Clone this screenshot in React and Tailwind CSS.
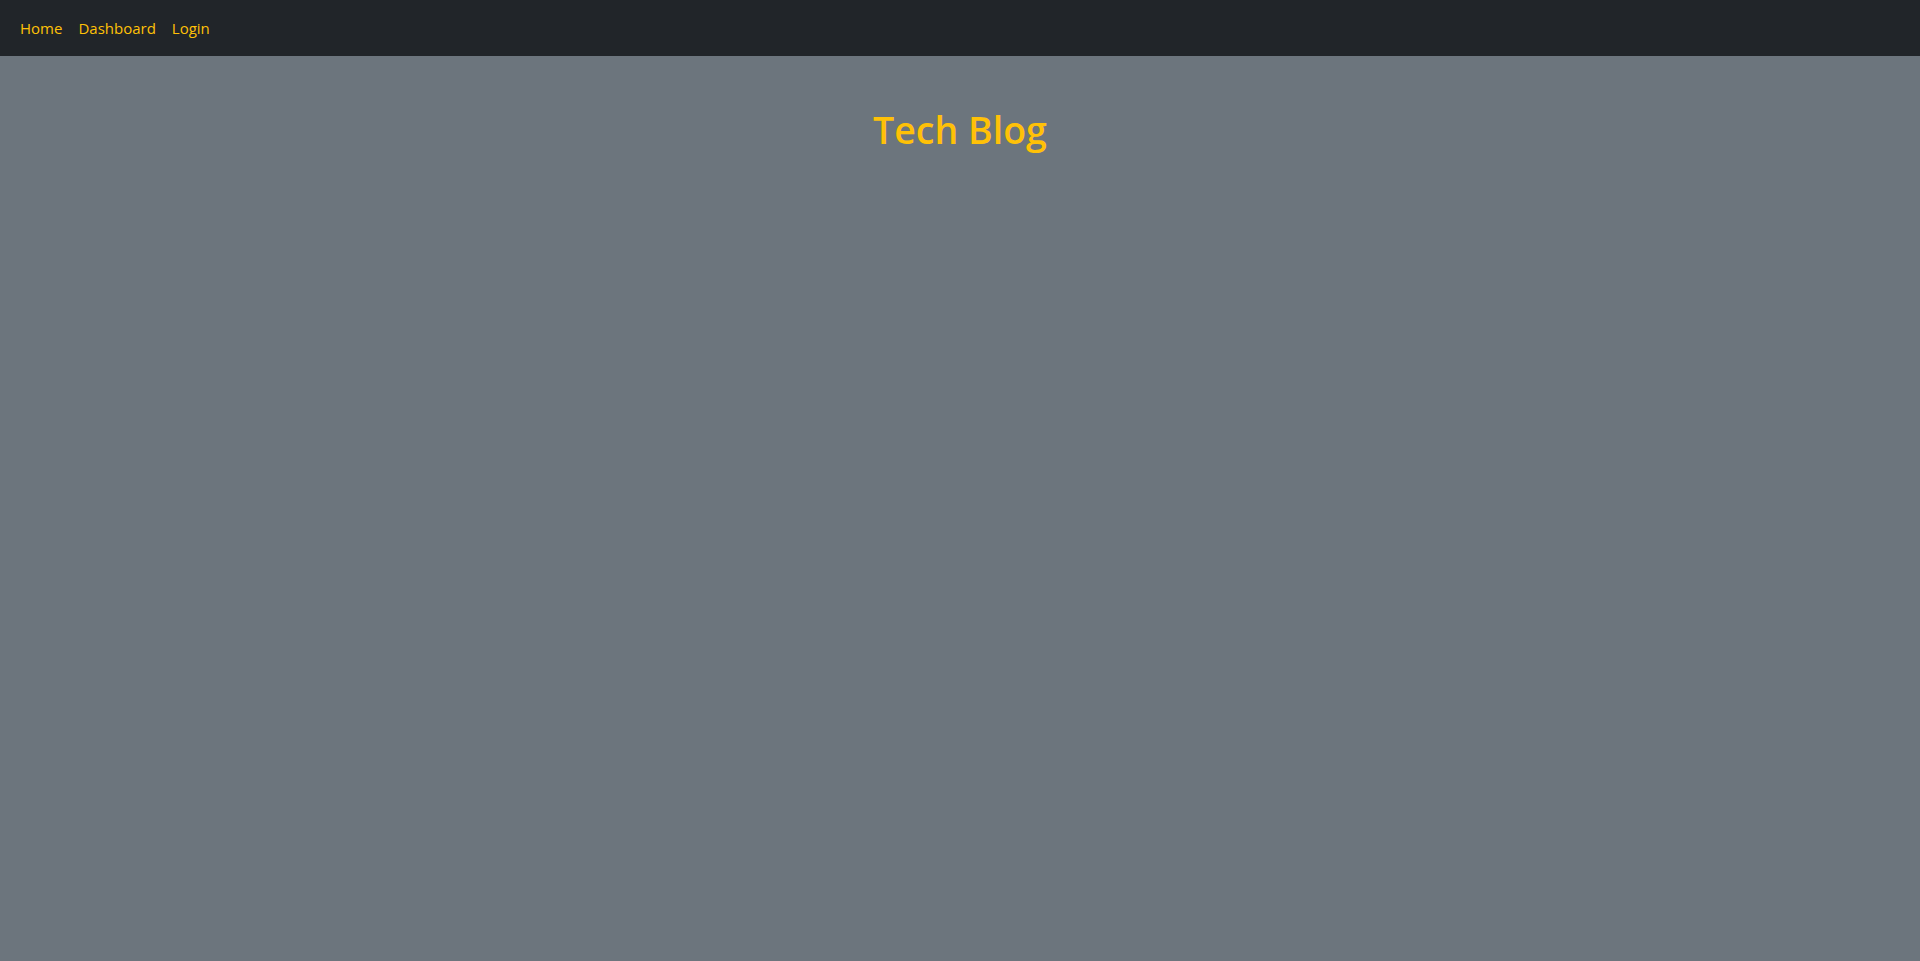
import React from 'react';

const links = ['Home', 'Dashboard', 'Login'];

export default function App() {
  return (
    <div className="min-h-[961px] bg-[#6c757d] font-['Open_Sans',sans-serif]">
      {/* Navbar */}
      <nav className="h-14 bg-[#212529] flex items-center px-3">
        <ul className="flex">
          {links.map((link) => (
            <li key={link}>
              <a href="#" className="block px-2 py-2 text-[15px] leading-6 text-[#ffc107]">
                {link}
              </a>
            </li>
          ))}
        </ul>
      </nav>

      {/* Header */}
      <header className="pt-[51px] text-center">
        <h1 className="text-[37.5px] leading-[1.2] font-semibold text-[#ffc107]">Tech Blog</h1>
      </header>
    </div>
  );
}
